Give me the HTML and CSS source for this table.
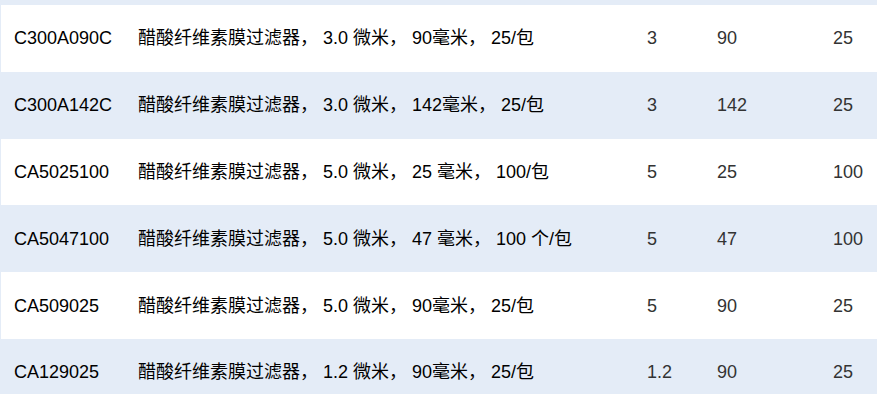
FILE: index.html
```html
<!DOCTYPE html>
<html lang="zh">
<head>
<meta charset="utf-8">
<link rel="stylesheet" href="styles.css">
</head>
<body>
<div class="table">
  <div class="row alt top"></div>
  <div class="row">
    <div class="c code">C300A090C</div><div class="c desc">醋酸纤维素膜过滤器， 3.0 微米， 90毫米， 25/包</div><div class="c num n1">3</div><div class="c num n2">90</div><div class="c num n3">25</div>
  </div>
  <div class="row alt">
    <div class="c code">C300A142C</div><div class="c desc">醋酸纤维素膜过滤器， 3.0 微米， 142毫米， 25/包</div><div class="c num n1">3</div><div class="c num n2">142</div><div class="c num n3">25</div>
  </div>
  <div class="row">
    <div class="c code">CA5025100</div><div class="c desc">醋酸纤维素膜过滤器， 5.0 微米， 25 毫米， 100/包</div><div class="c num n1">5</div><div class="c num n2">25</div><div class="c num n3">100</div>
  </div>
  <div class="row alt">
    <div class="c code">CA5047100</div><div class="c desc">醋酸纤维素膜过滤器， 5.0 微米， 47 毫米， 100 个/包</div><div class="c num n1">5</div><div class="c num n2">47</div><div class="c num n3">100</div>
  </div>
  <div class="row">
    <div class="c code">CA509025</div><div class="c desc">醋酸纤维素膜过滤器， 5.0 微米， 90毫米， 25/包</div><div class="c num n1">5</div><div class="c num n2">90</div><div class="c num n3">25</div>
  </div>
  <div class="row alt">
    <div class="c code">CA129025</div><div class="c desc">醋酸纤维素膜过滤器， 1.2 微米， 90毫米， 25/包</div><div class="c num n1">1.2</div><div class="c num n2">90</div><div class="c num n3">25</div>
  </div>
</div>
</body>
</html>
```

FILE: styles.css
```css
html, body {
  margin: 0;
  padding: 0;
  background: #ffffff;
}
body {
  font-family: "Liberation Sans", Arial, "Noto Sans CJK SC", sans-serif;
  font-size: 18px;
  color: #000;
  overflow: hidden;
}
.table {
  width: 877px;
  border-left: 1px solid #e4ecf7;
  box-sizing: border-box;
}
.row {
  display: grid;
  grid-template-columns: 124px 509px 70px 116px 1fr;
  align-items: center;
  height: 66.8px;
  padding-left: 13px;
  background: #ffffff;
}
.row.alt {
  background: #e4ecf7;
}
.row.top {
  height: 5px;
}
.c {
  white-space: nowrap;
  line-height: 22px;
}
.num {
  color: #333333;
}
```
